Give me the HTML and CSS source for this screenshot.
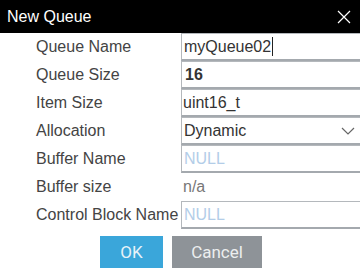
FILE: index.html
```html
<!DOCTYPE html>
<html>
<head>
  <title>New Queue</title>
  <meta name="viewport" content="width=device-width, initial-scale=1.0">
  <link rel="stylesheet" href="styles.css">
</head>
<body>

  <header class="titlebar">
    <span class="title">New Queue</span>
    <svg class="close" width="14" height="14" viewBox="0 0 14 14">
      <path d="M1 1 L13 13 M13 1 L1 13" stroke="#fff" stroke-width="1.2" fill="none"/>
    </svg>
  </header>

  <div class="form">
    <label>Queue Name</label>
    <div class="field">myQueue02<span class="caret"></span></div>

    <label>Queue Size</label>
    <div class="field bold">16</div>

    <label>Item Size</label>
    <div class="field tight">uint16_t</div>

    <label>Allocation</label>
    <div class="field select">Dynamic
      <svg class="chev" width="14" height="8" viewBox="0 0 14 8">
        <path d="M1 1 L7 7 L13 1" stroke="#666" stroke-width="1.2" fill="none"/>
      </svg>
    </div>

    <label>Buffer Name</label>
    <div class="field empty">NULL</div>

    <label>Buffer size</label>
    <div class="plain">n/a</div>

    <label>Control Block Name</label>
    <div class="field empty">NULL</div>
  </div>

  <div class="buttons">
    <button class="ok">OK</button>
    <button class="cancel">Cancel</button>
  </div>

</body>
</html>
```

FILE: styles.css
```css
body { margin: 0; background: #fff; font-family: "Liberation Sans", Arial, sans-serif; font-size: 16px; color: #404040; overflow: hidden; }
.titlebar { height: 33px; background: #000; color: #fff; display: flex; align-items: center; justify-content: space-between; padding: 0 8px 0 7px; }
.title { font-size: 16px; }
.close { margin-right: 1px; }
.form { display: grid; grid-template-columns: 145px 1fr; grid-auto-rows: 28px; padding-left: 36px; }
.form label { display: flex; align-items: center; white-space: nowrap; color: #444; }
.field {
  height: 25px; margin-bottom: 1px;
  border: 1px solid #b4b8bc; border-bottom: 2px solid #a4a9ae; border-right: none;
  display: flex; align-items: center; padding-left: 2px; color: #333;
  position: relative;
}
.bold { font-weight: bold; padding-left: 3px; }
.tight { padding-left: 1px; }
.caret { display: inline-block; width: 1px; height: 19px; background: #222; margin-left: 1px; }
.select .chev { position: absolute; right: 5px; top: 9px; }
.empty { color: #b3cde8; }
.plain { display: flex; align-items: center; padding-left: 2px; color: #777; }
.buttons { display: flex; gap: 9px; padding: 7px 0 0 100px; }
button { border: none; height: 32px; font-family: Roboto, "Liberation Sans", sans-serif; font-size: 17px; color: #e8f2f8; padding: 0; }
.ok { width: 63px; background: #3aa6da; }
.cancel { width: 90px; background: #8e9398; color: #eceeef; }
```
